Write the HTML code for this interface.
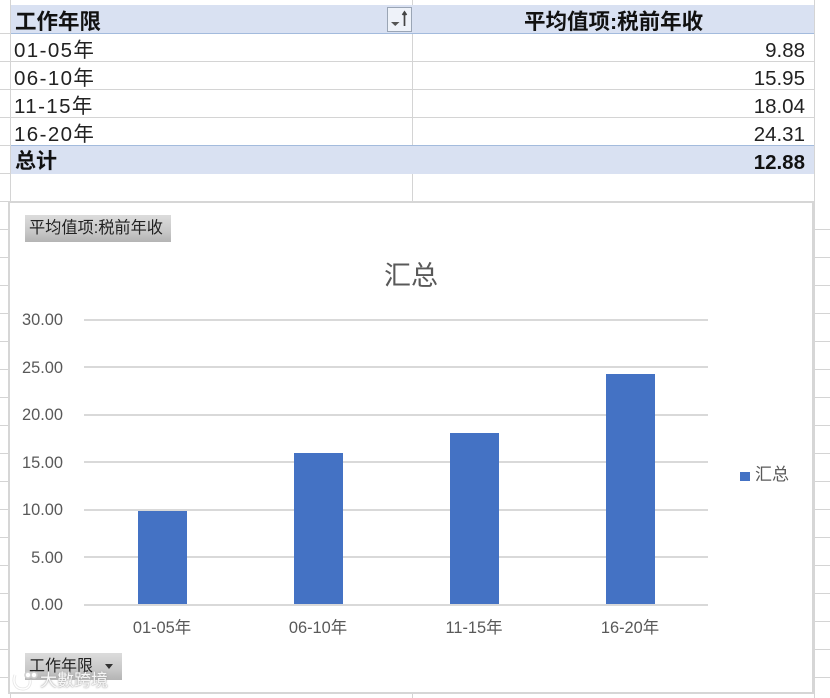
<!DOCTYPE html>
<html lang="zh">
<head>
<meta charset="utf-8">
<style>
html,body{margin:0;padding:0;background:#fff}
#p{position:relative;width:830px;height:698px;overflow:hidden;background:#fff;font-family:"Liberation Sans","Noto Sans CJK SC",sans-serif;color:#111}
#p div{position:absolute;white-space:nowrap}
.h{height:1px;background:#d4d4d4}
.v{width:1px;background:#d4d4d4}
.t{font-size:20.5px;line-height:28px;color:#222}
.b{font-weight:bold;color:#111}
.r{text-align:right;right:25px}
.ax{font-size:16.4px;color:#595959;line-height:18px}
.yl{left:11px;width:52px;text-align:right}
.xl{width:100px;text-align:center}
.grid{left:84px;width:624px;height:2px;background:#d9d9d9}
.bar{width:49px;background:#4472c4}
.btn{background:linear-gradient(#dcdcdc,#c8c8c8 60%,#b4b4b4);color:#222;font-size:16.2px}
</style>
</head>
<body>
<div id="p">
<div class="h" style="left:0;top:33px;width:11px"></div>
<div class="h" style="left:0;top:61px;width:11px"></div>
<div class="h" style="left:0;top:89px;width:11px"></div>
<div class="h" style="left:0;top:117px;width:11px"></div>
<div class="h" style="left:0;top:145px;width:11px"></div>
<div class="h" style="left:0;top:173px;width:11px"></div>
<div class="h" style="left:0;top:201px;width:11px"></div>
<div class="h" style="left:0;top:229px;width:830px"></div>
<div class="h" style="left:0;top:257px;width:830px"></div>
<div class="h" style="left:0;top:285px;width:830px"></div>
<div class="h" style="left:0;top:313px;width:830px"></div>
<div class="h" style="left:0;top:341px;width:830px"></div>
<div class="h" style="left:0;top:369px;width:830px"></div>
<div class="h" style="left:0;top:397px;width:830px"></div>
<div class="h" style="left:0;top:425px;width:830px"></div>
<div class="h" style="left:0;top:453px;width:830px"></div>
<div class="h" style="left:0;top:481px;width:830px"></div>
<div class="h" style="left:0;top:509px;width:830px"></div>
<div class="h" style="left:0;top:537px;width:830px"></div>
<div class="h" style="left:0;top:565px;width:830px"></div>
<div class="h" style="left:0;top:593px;width:830px"></div>
<div class="h" style="left:0;top:621px;width:830px"></div>
<div class="h" style="left:0;top:649px;width:830px"></div>
<div class="h" style="left:0;top:677px;width:830px"></div>
<div class="v" style="left:10px;top:0;height:698px"></div>
<div class="v" style="left:412px;top:0;height:698px"></div>
<div class="v" style="left:814px;top:0;height:698px"></div>

<div style="left:11px;top:34px;width:803px;height:111px;background:#fff"></div>
<div class="h" style="left:11px;top:61px;width:803px"></div>
<div class="h" style="left:11px;top:89px;width:803px"></div>
<div class="h" style="left:11px;top:117px;width:803px"></div>
<div class="h" style="left:11px;top:173px;width:803px"></div>
<div class="v" style="left:412px;top:34px;height:111px"></div>

<div style="left:11px;top:5px;width:803px;height:28px;background:#d9e1f2"></div>
<div style="left:11px;top:33px;width:803px;height:1px;background:#a3bbdd"></div>
<div style="left:11px;top:145px;width:803px;height:1px;background:#a3bbdd"></div>
<div style="left:11px;top:146px;width:803px;height:28px;background:#d9e1f2"></div>

<div class="t b" style="left:15px;top:8px;font-size:21.5px">工作年限</div>
<div class="t b" style="left:524px;top:8px;font-size:21.5px">平均值项:税前年收</div>
<div style="left:387px;top:7px;width:25px;height:25px;border:1px solid #9aa5b5;box-sizing:border-box;background:#eef2f9"></div>
<svg style="position:absolute;left:387px;top:7px" width="25" height="25" viewBox="0 0 25 25"><path d="M4 15h8.5l-4.250 4z" fill="#555"/><path d="M17.500 5v14M15.500 8l2-3 2 3" fill="none" stroke="#444" stroke-width="1.700"/></svg>

<div class="t" style="left:14px;top:37px;letter-spacing:1.4px">01-05年</div>
<div class="t" style="left:14px;top:65px;letter-spacing:1.4px">06-10年</div>
<div class="t" style="left:14px;top:93px;letter-spacing:1.4px">11-15年</div>
<div class="t" style="left:14px;top:121px;letter-spacing:1.4px">16-20年</div>
<div class="t b" style="left:15px;top:148px;font-size:21px">总计</div>
<div class="t r" style="top:37px">9.88</div>
<div class="t r" style="top:65px">15.95</div>
<div class="t r" style="top:93px">18.04</div>
<div class="t r" style="top:121px">24.31</div>
<div class="t b r" style="top:149px">12.88</div>

<div style="left:8px;top:201px;width:807px;height:493px;box-sizing:border-box;background:#fff;border:solid #d6d6d6;border-width:2px 3px 2px 2px"></div>

<div class="btn" style="left:25px;top:215px;width:146px;height:27px;line-height:27px;text-indent:4px">平均值项:税前年收</div>
<div style="left:384px;top:257px;font-size:27px;line-height:38px;color:#595959">汇总</div>

<div class="grid" style="top:319px"></div>
<div class="grid" style="top:366px"></div>
<div class="grid" style="top:414px"></div>
<div class="grid" style="top:461px"></div>
<div class="grid" style="top:509px"></div>
<div class="grid" style="top:556px"></div>
<div class="grid" style="top:604px"></div>

<div class="ax yl" style="top:311px">30.00</div>
<div class="ax yl" style="top:359px">25.00</div>
<div class="ax yl" style="top:406px">20.00</div>
<div class="ax yl" style="top:454px">15.00</div>
<div class="ax yl" style="top:501px">10.00</div>
<div class="ax yl" style="top:549px">5.00</div>
<div class="ax yl" style="top:596px">0.00</div>

<div class="bar" style="left:138px;top:511px;height:93px"></div>
<div class="bar" style="left:294px;top:453px;height:151px"></div>
<div class="bar" style="left:450px;top:433px;height:171px"></div>
<div class="bar" style="left:606px;top:374px;height:230px"></div>

<div class="ax xl" style="left:112px;top:619px">01-05年</div>
<div class="ax xl" style="left:268px;top:619px">06-10年</div>
<div class="ax xl" style="left:424px;top:619px">11-15年</div>
<div class="ax xl" style="left:580px;top:619px">16-20年</div>

<div style="left:740px;top:472px;width:10px;height:9px;background:#4472c4"></div>
<div class="ax" style="left:755px;top:466px;font-size:17px">汇总</div>

<div class="btn" style="left:25px;top:653px;width:97px;height:27px;line-height:28px;text-indent:4px;font-size:16px">工作年限</div>
<svg style="position:absolute;left:104px;top:664px" width="10" height="6" viewBox="0 0 10 6"><path d="M1 0h8l-4 5z" fill="#333"/></svg>

<svg style="position:absolute;left:10px;top:670px" width="30" height="24" viewBox="0 0 30 24"><path d="M5 5c-3 8 1 14 8 14 5 0 8-4 7-9" fill="none" stroke="#e4e4e4" stroke-width="3"/><path d="M5 5c-3 8 1 14 8 14 5 0 8-4 7-9" fill="none" stroke="#fff" stroke-width="1.500"/><circle cx="18" cy="5" r="3" fill="#fff" stroke="#cfcfcf" stroke-width="1.500"/><circle cx="24" cy="5" r="3" fill="#fff" stroke="#cfcfcf" stroke-width="1.500"/></svg>
<div style="left:40px;top:671px;font-size:17px;line-height:20px;color:#f6f6f6;text-shadow:0 0 2px #aaa,0 0 1px #999">大數跨境</div>
</div>
</body>
</html>
